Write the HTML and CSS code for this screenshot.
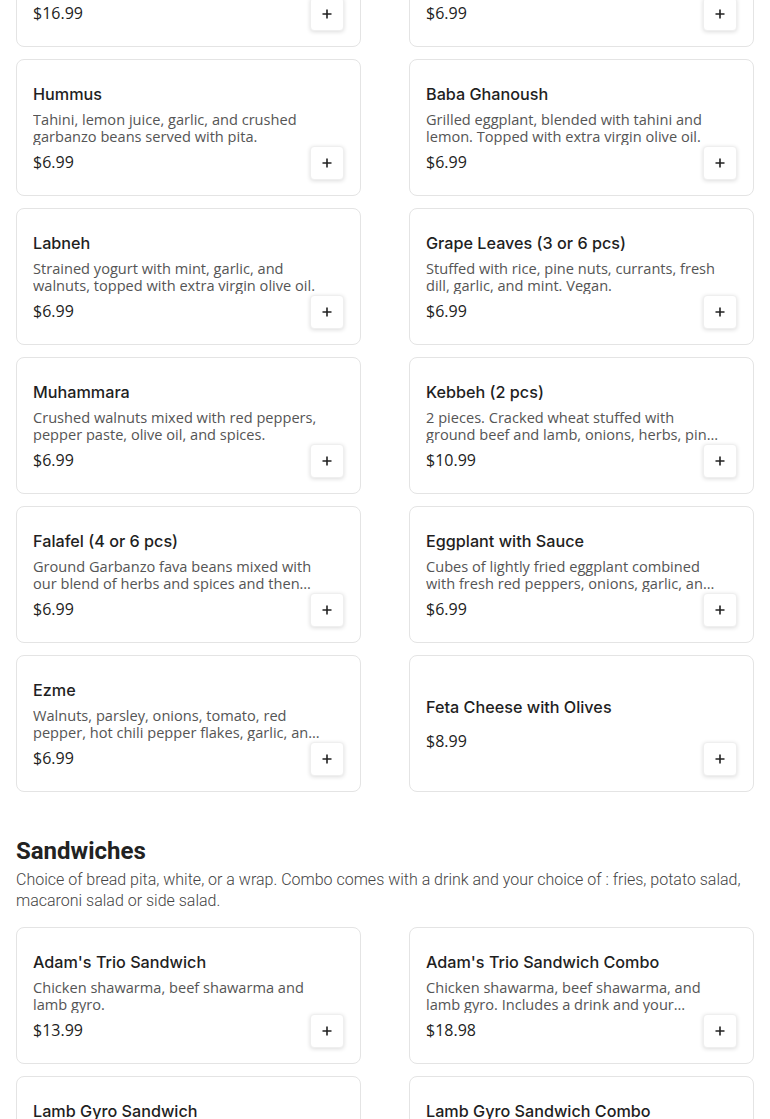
FILE: index.html
```html
<!DOCTYPE html>
<html lang="en">
<head>
<meta charset="utf-8">
<title>Menu</title>
<link rel="stylesheet" href="styles.css">
</head>
<body>
<main class="menu">
  <section class="section section-first">
    <div class="grid">
      <article class="card">
        <div class="info">
          <h3 class="title">Mezza Platter</h3>
          <p class="desc">Hummus, baba ghanoush, tabbouleh and falafel.</p>
          <p class="price">$16.99</p>
        </div>
        <button class="add" aria-label="Add"><svg viewBox="0 0 12 12" width="12" height="12"><path d="M6 1.5v9M1.5 6h9" stroke="#222" stroke-width="1.6" fill="none"/></svg></button>
      </article>
      <article class="card">
        <div class="info">
          <h3 class="title">Tabbouleh</h3>
          <p class="desc">Chopped parsley, tomato, onion, bulgur wheat, mint, lemon juice and olive oil.</p>
          <p class="price">$6.99</p>
        </div>
        <button class="add" aria-label="Add"><svg viewBox="0 0 12 12" width="12" height="12"><path d="M6 1.5v9M1.5 6h9" stroke="#222" stroke-width="1.6" fill="none"/></svg></button>
      </article>
      <article class="card">
        <div class="info">
          <h3 class="title">Hummus</h3>
          <p class="desc">Tahini, lemon juice, garlic, and crushed garbanzo beans served with pita.</p>
          <p class="price">$6.99</p>
        </div>
        <button class="add" aria-label="Add"><svg viewBox="0 0 12 12" width="12" height="12"><path d="M6 1.5v9M1.5 6h9" stroke="#222" stroke-width="1.6" fill="none"/></svg></button>
      </article>
      <article class="card">
        <div class="info">
          <h3 class="title">Baba Ghanoush</h3>
          <p class="desc">Grilled eggplant, blended with tahini and lemon. Topped with extra virgin olive oil.</p>
          <p class="price">$6.99</p>
        </div>
        <button class="add" aria-label="Add"><svg viewBox="0 0 12 12" width="12" height="12"><path d="M6 1.5v9M1.5 6h9" stroke="#222" stroke-width="1.6" fill="none"/></svg></button>
      </article>
      <article class="card">
        <div class="info">
          <h3 class="title">Labneh</h3>
          <p class="desc">Strained yogurt with mint, garlic, and walnuts, topped with extra virgin olive oil.</p>
          <p class="price">$6.99</p>
        </div>
        <button class="add" aria-label="Add"><svg viewBox="0 0 12 12" width="12" height="12"><path d="M6 1.5v9M1.5 6h9" stroke="#222" stroke-width="1.6" fill="none"/></svg></button>
      </article>
      <article class="card">
        <div class="info">
          <h3 class="title">Grape Leaves (3 or 6 pcs)</h3>
          <p class="desc">Stuffed with rice, pine nuts, currants, fresh dill, garlic, and mint. Vegan.</p>
          <p class="price">$6.99</p>
        </div>
        <button class="add" aria-label="Add"><svg viewBox="0 0 12 12" width="12" height="12"><path d="M6 1.5v9M1.5 6h9" stroke="#222" stroke-width="1.6" fill="none"/></svg></button>
      </article>
      <article class="card">
        <div class="info">
          <h3 class="title">Muhammara</h3>
          <p class="desc">Crushed walnuts mixed with red peppers, pepper paste, olive oil, and spices.</p>
          <p class="price">$6.99</p>
        </div>
        <button class="add" aria-label="Add"><svg viewBox="0 0 12 12" width="12" height="12"><path d="M6 1.5v9M1.5 6h9" stroke="#222" stroke-width="1.6" fill="none"/></svg></button>
      </article>
      <article class="card">
        <div class="info">
          <h3 class="title">Kebbeh (2 pcs)</h3>
          <p class="desc">2 pieces. Cracked wheat stuffed with ground beef and lamb, onions, herbs, pine nuts and spices.</p>
          <p class="price">$10.99</p>
        </div>
        <button class="add" aria-label="Add"><svg viewBox="0 0 12 12" width="12" height="12"><path d="M6 1.5v9M1.5 6h9" stroke="#222" stroke-width="1.6" fill="none"/></svg></button>
      </article>
      <article class="card">
        <div class="info">
          <h3 class="title">Falafel (4 or 6 pcs)</h3>
          <p class="desc">Ground Garbanzo fava beans mixed with our blend of herbs and spices and then deep fried.</p>
          <p class="price">$6.99</p>
        </div>
        <button class="add" aria-label="Add"><svg viewBox="0 0 12 12" width="12" height="12"><path d="M6 1.5v9M1.5 6h9" stroke="#222" stroke-width="1.6" fill="none"/></svg></button>
      </article>
      <article class="card">
        <div class="info">
          <h3 class="title">Eggplant with Sauce</h3>
          <p class="desc">Cubes of lightly fried eggplant combined with fresh red peppers, onions, garlic, and tomato sauce.</p>
          <p class="price">$6.99</p>
        </div>
        <button class="add" aria-label="Add"><svg viewBox="0 0 12 12" width="12" height="12"><path d="M6 1.5v9M1.5 6h9" stroke="#222" stroke-width="1.6" fill="none"/></svg></button>
      </article>
      <article class="card">
        <div class="info">
          <h3 class="title">Ezme</h3>
          <p class="desc">Walnuts, parsley, onions, tomato, red pepper, hot chili pepper flakes, garlic, and pomegranate molasses.</p>
          <p class="price">$6.99</p>
        </div>
        <button class="add" aria-label="Add"><svg viewBox="0 0 12 12" width="12" height="12"><path d="M6 1.5v9M1.5 6h9" stroke="#222" stroke-width="1.6" fill="none"/></svg></button>
      </article>
      <article class="card">
        <div class="info">
          <h3 class="title">Feta Cheese with Olives</h3>
          <p class="desc"></p>
          <p class="price">$8.99</p>
        </div>
        <button class="add" aria-label="Add"><svg viewBox="0 0 12 12" width="12" height="12"><path d="M6 1.5v9M1.5 6h9" stroke="#222" stroke-width="1.6" fill="none"/></svg></button>
      </article>
    </div>
  </section>

  <section class="section">
    <h2 class="section-title">Sandwiches</h2>
    <p class="section-desc">Choice of bread pita, white, or a wrap. Combo comes with a drink and your choice of : fries, potato salad, macaroni salad or side salad.</p>
    <div class="grid">
      <article class="card">
        <div class="info">
          <h3 class="title">Adam's Trio Sandwich</h3>
          <p class="desc">Chicken shawarma, beef shawarma and lamb gyro.</p>
          <p class="price">$13.99</p>
        </div>
        <button class="add" aria-label="Add"><svg viewBox="0 0 12 12" width="12" height="12"><path d="M6 1.5v9M1.5 6h9" stroke="#222" stroke-width="1.6" fill="none"/></svg></button>
      </article>
      <article class="card">
        <div class="info">
          <h3 class="title">Adam's Trio Sandwich Combo</h3>
          <p class="desc">Chicken shawarma, beef shawarma, and lamb gyro. Includes a drink and your choice of fries, potato salad, macaroni salad or side salad.</p>
          <p class="price">$18.98</p>
        </div>
        <button class="add" aria-label="Add"><svg viewBox="0 0 12 12" width="12" height="12"><path d="M6 1.5v9M1.5 6h9" stroke="#222" stroke-width="1.6" fill="none"/></svg></button>
      </article>
      <article class="card">
        <div class="info">
          <h3 class="title">Lamb Gyro Sandwich</h3>
          <p class="desc">Lamb gyro with lettuce, tomato, onion and tzatziki sauce.</p>
          <p class="price">$10.99</p>
        </div>
        <button class="add" aria-label="Add"><svg viewBox="0 0 12 12" width="12" height="12"><path d="M6 1.5v9M1.5 6h9" stroke="#222" stroke-width="1.6" fill="none"/></svg></button>
      </article>
      <article class="card">
        <div class="info">
          <h3 class="title">Lamb Gyro Sandwich Combo</h3>
          <p class="desc">Lamb gyro with lettuce, tomato, onion and tzatziki sauce. Includes a drink and your choice of side.</p>
          <p class="price">$15.98</p>
        </div>
        <button class="add" aria-label="Add"><svg viewBox="0 0 12 12" width="12" height="12"><path d="M6 1.5v9M1.5 6h9" stroke="#222" stroke-width="1.6" fill="none"/></svg></button>
      </article>
    </div>
  </section>
</main>
</body>
</html>
```

FILE: styles.css
```css
* { box-sizing: border-box; }

html, body {
  margin: 0;
  padding: 0;
  background: #ffffff;
}

body {
  font-family: "Open Sans", "Liberation Sans", sans-serif;
  color: #1c1c1c;
}

.menu {
  padding: 0 16px;
  margin-top: -90px;
}

.section-first {
  margin-bottom: 43px;
}

.grid {
  display: grid;
  grid-template-columns: 1fr 1fr;
  column-gap: 48px;
  row-gap: 12px;
}

.card {
  display: grid;
  height: 137px;
  padding: 16px 16px 15px;
  border: 1px solid #e4e4e4;
  border-radius: 8px;
  background: #fff;
}

.info {
  grid-area: 1 / 1;
  align-self: center;
  min-width: 0;
  padding-right: 16px;
}

.title {
  margin: 0 0 5px;
  font-family: Inter, "Open Sans", sans-serif;
  font-size: 16.2px;
  line-height: 24px;
  font-weight: 500;
  color: #1f1f1f;
}

.desc {
  margin: 0;
  font-size: 14.6px;
  line-height: 17px;
  color: #555;
  display: -webkit-box;
  -webkit-line-clamp: 2;
  -webkit-box-orient: vertical;
  overflow: hidden;
}

.price {
  margin: 5px 0 0;
  font-size: 16px;
  line-height: 24px;
  color: #222;
}

.add {
  grid-area: 1 / 1;
  align-self: end;
  justify-self: end;
  width: 34px;
  height: 34px;
  padding: 0;
  margin: 0;
  display: flex;
  align-items: center;
  justify-content: center;
  background: #fff;
  border: 1px solid #efefef;
  border-radius: 4px;
  box-shadow: 0 1px 4px rgba(0, 0, 0, 0.14);
  cursor: pointer;
}

.add svg { display: block; }

.section-title {
  margin: 0;
  font-family: Roboto, "Liberation Sans", sans-serif;
  font-size: 24px;
  line-height: 32px;
  font-weight: 700;
  color: #222;
}

.section-desc {
  margin: 2px 0 16px;
  font-family: Roboto, "Liberation Sans", sans-serif;
  font-size: 16px;
  line-height: 21px;
  font-weight: 300;
  color: #444;
}
```
